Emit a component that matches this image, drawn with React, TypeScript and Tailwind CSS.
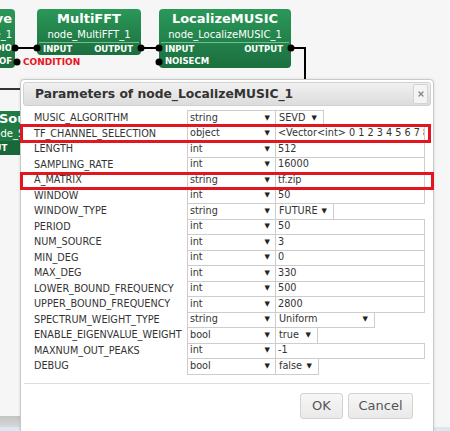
import { X } from 'lucide-react'

type Param = {
  name: string
  type: string
  value: string
  select?: number // width of a value <select>, when the value is a choice
}

const PARAMS: Param[] = [
  { name: 'MUSIC_ALGORITHM', type: 'string', value: 'SEVD', select: 48 },
  { name: 'TF_CHANNEL_SELECTION', type: 'object', value: '<Vector<int> 0 1 2 3 4 5 6 7 8>' },
  { name: 'LENGTH', type: 'int', value: '512' },
  { name: 'SAMPLING_RATE', type: 'int', value: '16000' },
  { name: 'A_MATRIX', type: 'string', value: 'tf.zip' },
  { name: 'WINDOW', type: 'int', value: '50' },
  { name: 'WINDOW_TYPE', type: 'string', value: 'FUTURE', select: 58 },
  { name: 'PERIOD', type: 'int', value: '50' },
  { name: 'NUM_SOURCE', type: 'int', value: '3' },
  { name: 'MIN_DEG', type: 'int', value: '0' },
  { name: 'MAX_DEG', type: 'int', value: '330' },
  { name: 'LOWER_BOUND_FREQUENCY', type: 'int', value: '500' },
  { name: 'UPPER_BOUND_FREQUENCY', type: 'int', value: '2800' },
  { name: 'SPECTRUM_WEIGHT_TYPE', type: 'string', value: 'Uniform', select: 99 },
  { name: 'ENABLE_EIGENVALUE_WEIGHT', type: 'bool', value: 'true', select: 42 },
  { name: 'MAXNUM_OUT_PEAKS', type: 'int', value: '-1' },
  { name: 'DEBUG', type: 'bool', value: 'false', select: 43 },
]

const FONT = { fontFamily: '"DejaVu Sans", Verdana, sans-serif' }

function Dot({ x, y }: { x: number; y: number }) {
  return (
    <div
      className="absolute h-[7px] w-[7px] -translate-x-1/2 -translate-y-1/2 rounded-full bg-black"
      style={{ left: x, top: y }}
    />
  )
}

function Arrow() {
  return <span className="text-[7px] leading-none text-[#222]">▼</span>
}

/** Canvas behind the dialog: the flow nodes and their wires. */
function Canvas() {
  return (
    <>
      {/* wires */}
      <div className="absolute left-[15px] top-[47px] h-[2px] w-[22px] bg-black" />
      <div className="absolute left-[141px] top-[47px] h-[2px] w-[18px] bg-black" />
      <div className="absolute left-[291px] top-[47px] h-[2px] w-[15px] bg-black" />
      <div className="absolute left-[304px] top-[47px] h-[33px] w-[2px] bg-black" />
      <div className="absolute left-0 top-[88px] h-[2px] w-[22px] bg-[#333]" />

      {/* node cut off at the left edge */}
      <div className="absolute left-[-265px] top-[9px] flex h-[59px] w-[280px] flex-col rounded-[4px] bg-gradient-to-b from-[#2a9858] to-[#1c6f3f] pr-[3px] text-right text-white">
        <div className="h-[19px] pt-[1px] text-[13px] font-bold leading-[18px]">AudioStreamFromWave</div>
        <div className="h-[14px] text-[10px] leading-[14px]">node_AudioStreamFromWave_1</div>
        <div className="h-px bg-[#6fbf8f]" />
        <div className="h-[13px] text-[8.5px] font-bold leading-[13px]">AUDIO</div>
        <div className="h-[13px] text-[8.5px] font-bold leading-[13px]">NOT_EOF</div>
      </div>
      <Dot x={15} y={48} />
      <Dot x={17} y={62} />
      <div className="absolute left-[23px] top-[55px] text-[9px] font-bold leading-[14px] text-[#e8141c]">
        CONDITION
      </div>

      {/* MultiFFT */}
      <div className="absolute left-[37px] top-[9px] flex h-[46px] w-[104px] flex-col rounded-[4px] bg-gradient-to-b from-[#2a9858] to-[#1c6f3f] text-white">
        <div className="h-[19px] pt-[1px] text-center text-[13px] font-bold leading-[18px]">MultiFFT</div>
        <div className="h-[14px] text-center text-[10px] leading-[14px]">node_MultiFFT_1</div>
        <div className="mx-[2px] h-px bg-[#6fbf8f]" />
        <div className="flex h-[12px] items-center justify-between pl-[6px] pr-[8px] text-[8.5px] font-bold">
          <span>INPUT</span>
          <span>OUTPUT</span>
        </div>
      </div>
      <Dot x={37} y={48} />
      <Dot x={141} y={48} />

      {/* LocalizeMUSIC */}
      <div className="absolute left-[159px] top-[9px] flex h-[59px] w-[132px] flex-col rounded-[4px] bg-gradient-to-b from-[#2a9858] to-[#1c6f3f] text-white">
        <div className="h-[19px] pt-[1px] text-center text-[13px] font-bold leading-[18px]">LocalizeMUSIC</div>
        <div className="h-[14px] text-center text-[10px] leading-[14px]">node_LocalizeMUSIC_1</div>
        <div className="mx-[2px] h-px bg-[#6fbf8f]" />
        <div className="flex h-[13px] items-center justify-between pl-[6px] pr-[8px] text-[8.5px] font-bold">
          <span>INPUT</span>
          <span>OUTPUT</span>
        </div>
        <div className="flex h-[13px] items-center pl-[6px] text-[8.5px] font-bold">NOISECM</div>
      </div>
      <Dot x={159} y={48} />
      <Dot x={159} y={62} />
      <Dot x={291} y={48} />

      {/* node under the dialog on the left */}
      <div className="absolute left-[-30px] top-[111px] flex h-[44px] w-[120px] flex-col bg-[#1f7a44] text-white">
        <div className="h-[15px] pl-[29px] text-[13px] font-bold leading-[15px]">Source</div>
        <div className="h-[15px] pl-[18px] text-[10px] leading-[15px]">node_Source_1</div>
        <div className="h-[14px] bg-[#17693a] pl-[8px] text-[8.5px] font-bold leading-[14px]">INPUT</div>
      </div>

      {/* bottom strip */}
      <div className="absolute bottom-[4px] left-0 h-[11px] w-[22px] bg-gradient-to-b from-[#c4c4c4] to-[#d8d8d8]" />
      <div className="absolute bottom-0 left-0 h-[4px] w-[450px] bg-[#dbe7f3]" />
    </>
  )
}

function ParamRow({ p }: { p: Param }) {
  return (
    <div className="flex h-[15.5px] items-start text-[9.7px] text-[#333]">
      <div className="w-[164px] whitespace-nowrap pl-[11px] leading-[15.5px]">{p.name}</div>
      <div className="flex h-[16.5px] w-[88px] items-center justify-between border border-r-0 border-[#cdcdcd] bg-white pl-[2px] pr-[5px]">
        <span>{p.type}</span>
        <Arrow />
      </div>
      {p.select ? (
        <div className="w-[150px] border-l border-[#cdcdcd]">
          <div
            className="flex h-[16.5px] items-center justify-between border border-l-0 border-[#cdcdcd] bg-white pl-[3px] pr-[6px]"
            style={{ width: p.select }}
          >
            <span>{p.value}</span>
            <Arrow />
          </div>
        </div>
      ) : (
        <div className="flex h-[16.5px] w-[150px] items-center overflow-hidden whitespace-nowrap border border-[#cdcdcd] bg-white pl-[2px]">
          {p.value}
        </div>
      )}
    </div>
  )
}

function ParamsDialog() {
  return (
    <div className="absolute left-[20px] top-[79px] flex h-[380px] w-[414px] flex-col rounded-t-[4px] border border-[#c8c8c8] bg-white p-[2px] shadow-[0_0_3px_rgba(0,0,0,0.12)]">
      <div className="flex h-[24px] items-center justify-between rounded-[3px] border border-[#d0d0d0] bg-gradient-to-b from-[#f1f1f1] to-[#dcdcdc] pl-[11px] pr-[2px]">
        <span className="text-[12.3px] font-bold text-[#333]">Parameters of node_LocalizeMUSIC_1</span>
        <button className="flex h-[20px] w-[15px] items-center justify-center rounded-[2px] border border-[#d3d3d3] bg-[#f4f4f4]">
          <X size={8} strokeWidth={4} color="#8a8a8a" />
        </button>
      </div>

      <div className="mt-[4px] flex flex-col">
        {PARAMS.map((p) => (
          <ParamRow key={p.name} p={p} />
        ))}
      </div>

      <div className="mx-[1px] mt-[9px] h-px bg-[#dedede]" />

      <div className="mt-[9px] flex justify-end gap-[5px] pr-[18px]">
        <button className="h-[26px] w-[43px] rounded-[3px] border border-[#d3d3d3] bg-gradient-to-b from-[#f7f7f7] to-[#e9e9e9] text-[13px] text-[#555]">
          OK
        </button>
        <button className="h-[26px] w-[65px] rounded-[3px] border border-[#d3d3d3] bg-gradient-to-b from-[#f7f7f7] to-[#e9e9e9] text-[13px] text-[#555]">
          Cancel
        </button>
      </div>

      {/* red highlight boxes drawn over the rows */}
      <div className="pointer-events-none absolute left-[-1px] top-[44px] h-[19px] w-[411px] border-[3px] border-[#e3151f]" />
      <div className="pointer-events-none absolute left-[-1px] top-[92px] h-[18px] w-[414px] border-[3px] border-[#e3151f]" />
    </div>
  )
}

export default function App() {
  return (
    <div className="relative h-[431px] w-[450px] overflow-hidden bg-[#f6f6f6]" style={FONT}>
      <Canvas />
      <ParamsDialog />
    </div>
  )
}
